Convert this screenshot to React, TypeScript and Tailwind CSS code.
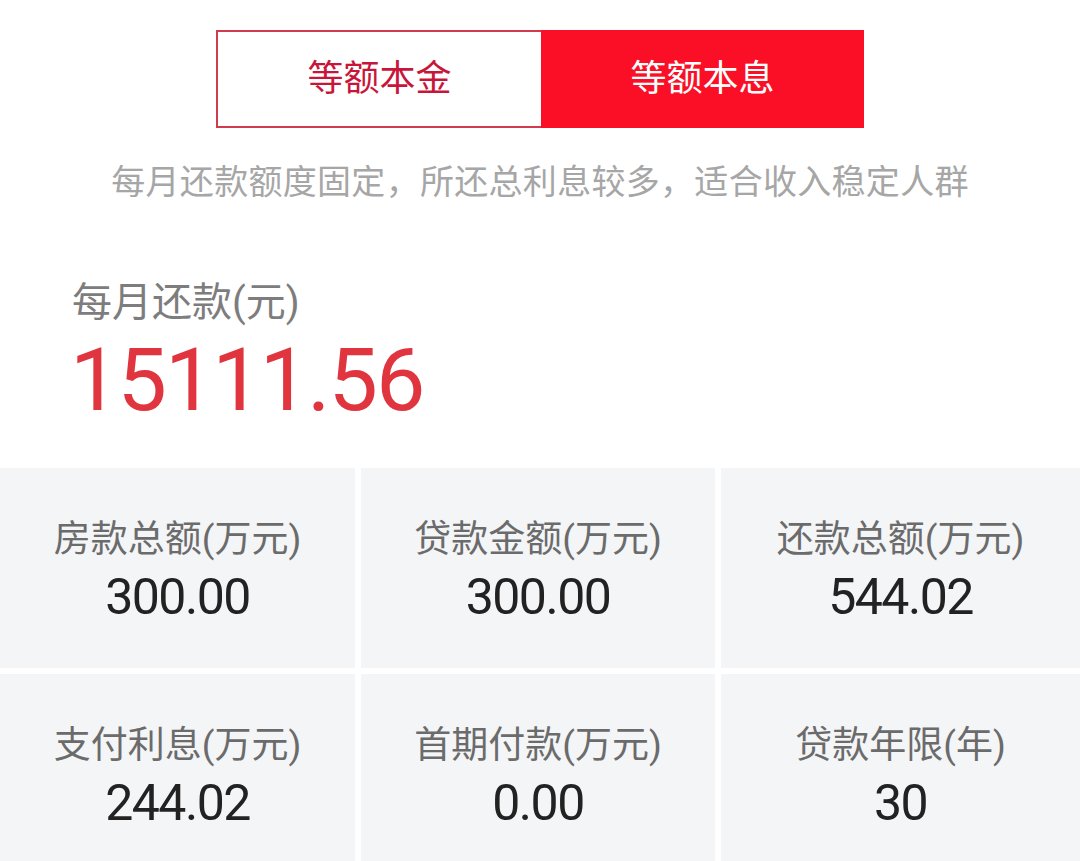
import React from 'react';

const FONT = { fontFamily: 'Roboto, "Noto Sans CJK SC", sans-serif' };

const stats = [
  { label: '房款总额(万元)', value: '300.00' },
  { label: '贷款金额(万元)', value: '300.00' },
  { label: '还款总额(万元)', value: '544.02' },
  { label: '支付利息(万元)', value: '244.02' },
  { label: '首期付款(万元)', value: '0.00' },
  { label: '贷款年限(年)', value: '30' },
];

const StatCell = ({ label, value }: { label: string; value: string }) => (
  <div className="h-[200px] bg-[#f4f5f7] flex flex-col items-center pt-[52px]">
    <div className="text-[37px] leading-[40px] text-[#6b6b6b]">{label}</div>
    <div className="mt-[12px] text-[50px] leading-none text-[#222222] tracking-[-1.5px]">{value}</div>
  </div>
);

export default function App() {
  return (
    <div className="w-[1080px] h-[861px] overflow-hidden bg-white" style={FONT}>
      <div className="pt-[30px]">
        <div className="mx-auto w-[648px] h-[98px] flex border-2 border-[#d23a4e]">
          <button className="flex-1 flex items-center justify-center bg-white text-[36px] text-[#c8163a]">
            等额本金
          </button>
          <button className="flex-1 -my-[2px] -mr-[2px] flex items-center justify-center bg-[#fa0f26] text-[36px] text-white">
            等额本息
          </button>
        </div>

        <p className="mt-[34px] text-center text-[34px] leading-[40px] tracking-[0.3px] text-[#a6a6a6]">
          每月还款额度固定，所还总利息较多，适合收入稳定人群
        </p>

        <div className="pl-[72px]">
          <div className="mt-[79px] text-[40px] leading-[44px] text-[#7d7d7d]">每月还款(元)</div>
          <div className="mt-[11px] -ml-[2px] text-[88px] leading-none text-[#e0343f] tracking-[-2px]">15111.56</div>
        </div>

        <div className="mt-[44px] grid grid-cols-[355px_354px_1fr] gap-[6px]">
          {stats.map((s) => (
            <StatCell key={s.label} label={s.label} value={s.value} />
          ))}
        </div>
      </div>
    </div>
  );
}
